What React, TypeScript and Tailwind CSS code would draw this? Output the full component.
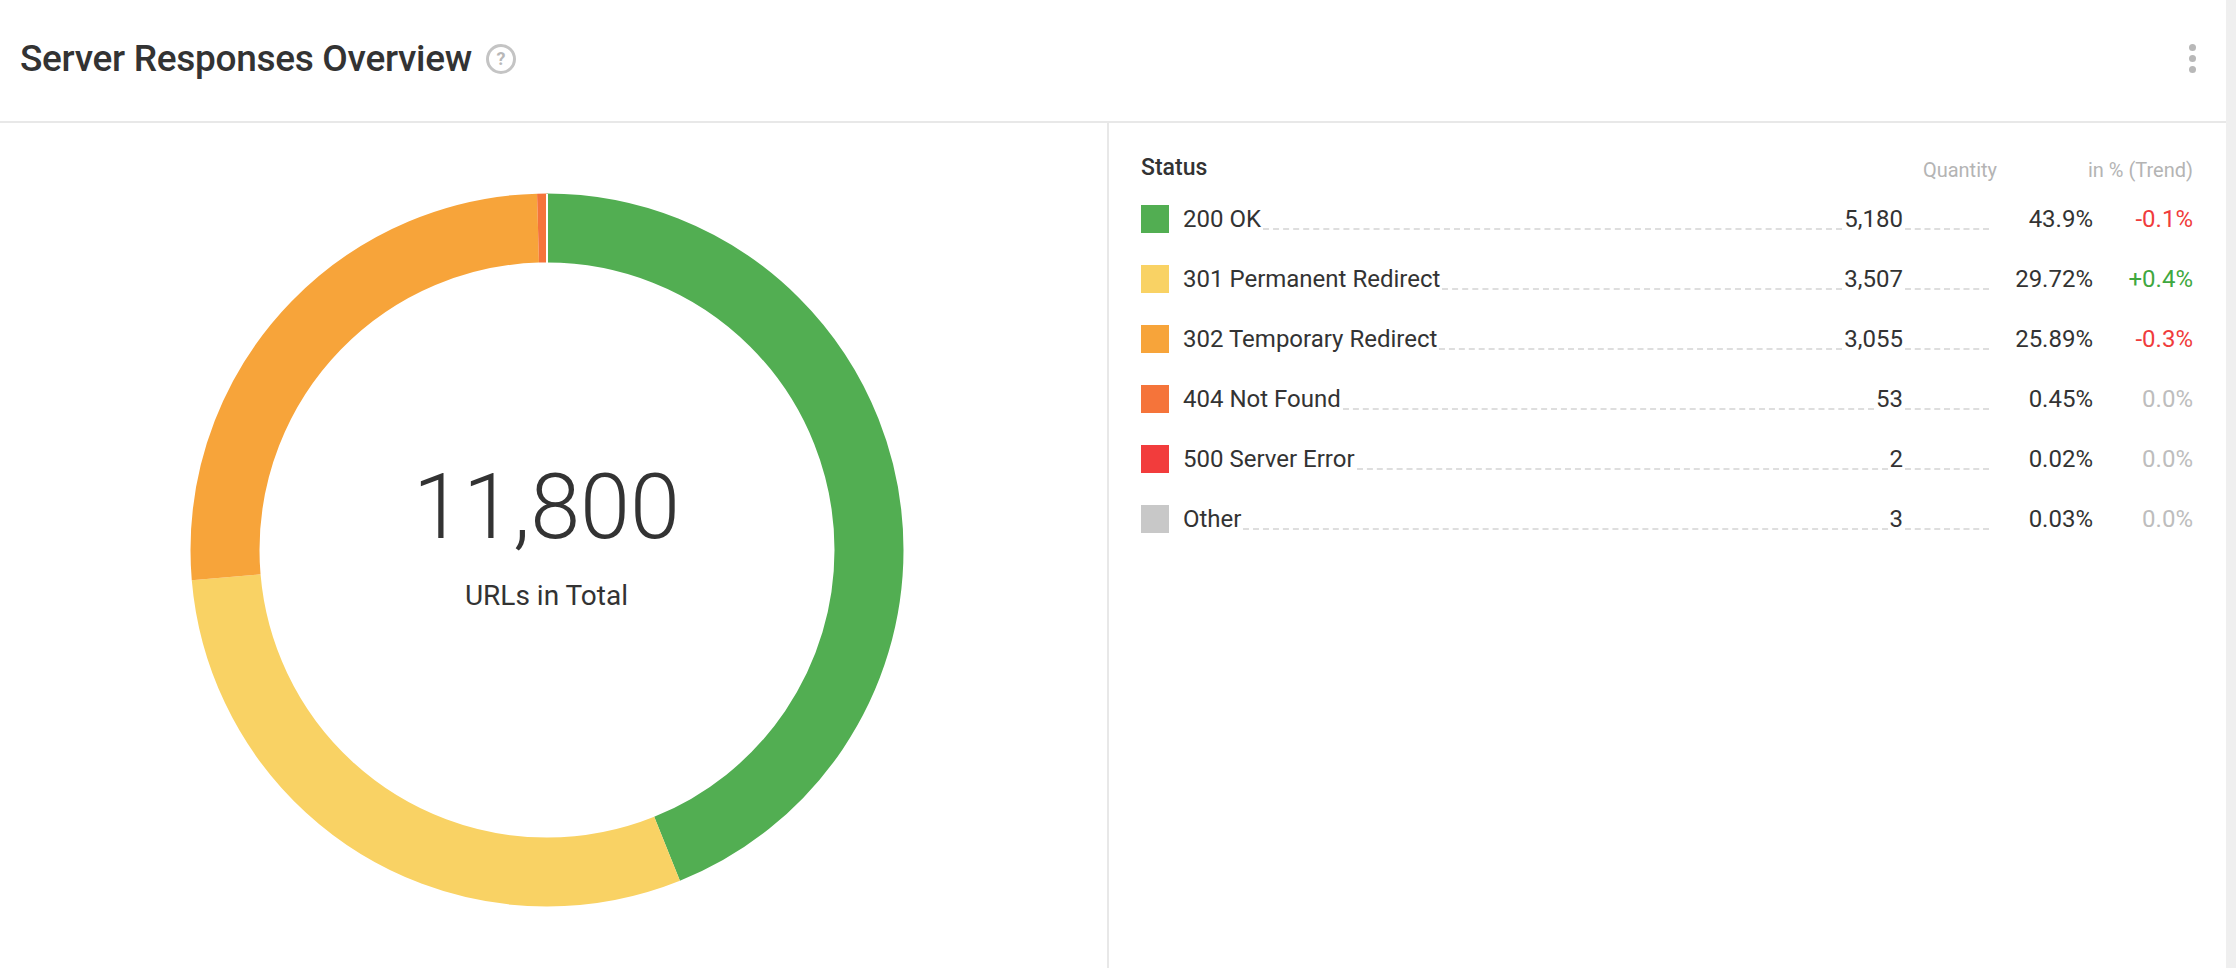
import React from "react";

const rows = [
  { label: "200 OK", qty: "5,180", pct: "43.9%", trend: "-0.1%", tc: "text-[#f03c3c]", color: "#52ae52", v: 43.9 },
  { label: "301 Permanent Redirect", qty: "3,507", pct: "29.72%", trend: "+0.4%", tc: "text-[#3fa83f]", color: "#f9d264", v: 29.72 },
  { label: "302 Temporary Redirect", qty: "3,055", pct: "25.89%", trend: "-0.3%", tc: "text-[#f03c3c]", color: "#f7a43a", v: 25.89 },
  { label: "404 Not Found", qty: "53", pct: "0.45%", trend: "0.0%", tc: "text-[#bdbdbd]", color: "#f5743a", v: 0.45 },
  { label: "500 Server Error", qty: "2", pct: "0.02%", trend: "0.0%", tc: "text-[#bdbdbd]", color: "#f23c3c", v: 0.02 },
  { label: "Other", qty: "3", pct: "0.03%", trend: "0.0%", tc: "text-[#bdbdbd]", color: "#c8c8c8", v: 0.03 },
];

function Donut() {
  const R = 322, C = 2 * Math.PI * R;
  let acc = 0;
  return (
    <svg width="720" height="720" viewBox="0 0 720 720">
      <g transform="rotate(-90 360 360)">
        {rows.map((r) => {
          const len = (r.v / 100) * C;
          const el = (
            <circle key={r.label} cx="360" cy="360" r={R} fill="none" stroke={r.color} strokeWidth="69"
              strokeDasharray={`${len} ${C}`} strokeDashoffset={-acc} />
          );
          acc += len;
          return el;
        })}
        <line x1="360" y1="0" x2="360" y2="0" />
      </g>
      <line x1="360" y1="4" x2="360" y2="73" stroke="#fff" strokeWidth="2" transform="rotate(0 360 360)" />
    </svg>
  );
}

export default function App() {
  return (
    <div className="w-[2236px] h-[968px] bg-white flex overflow-hidden" style={{ fontFamily: "Roboto, 'Liberation Sans', sans-serif" }}>
      <div className="flex-1 flex flex-col">
        <header className="h-[123px] border-b-2 border-[#e8e8e8] flex items-center justify-between pl-[20px] pr-[30px]">
          <div className="flex items-center gap-[14px] pb-[4px]">
            <h1 className="text-[37px] font-medium text-[#333] tracking-[-0.3px]">Server Responses Overview</h1>
            <span className="w-[30px] h-[30px] rounded-full border-[3px] border-[#c4c4c4] text-[#b8b8b8] text-[18px] font-bold flex items-center justify-center">?</span>
          </div>
          <div className="flex flex-col gap-[4px] pb-[4px]">
            <span className="w-[7px] h-[7px] rounded-full bg-[#b8b8b8]" />
            <span className="w-[7px] h-[7px] rounded-full bg-[#b8b8b8]" />
            <span className="w-[7px] h-[7px] rounded-full bg-[#b8b8b8]" />
          </div>
        </header>
        <div className="flex flex-1">
          <div className="w-[1109px] border-r-2 border-[#e8e8e8] flex justify-center pt-[67px] pl-[0px]">
            <div className="relative w-[720px] h-[720px] -ml-[14px]">
              <Donut />
              <div className="absolute inset-0 flex flex-col items-center justify-center pb-[20px]">
                <div className="text-[90px] font-light text-[#333] leading-none">11,800</div>
                <div className="text-[28px] text-[#333] mt-[22px]">URLs in Total</div>
              </div>
            </div>
          </div>
          <div className="flex-1 pl-[32px] pr-[33px] pt-[32px]">
            <div className="flex items-end h-[30px] text-[20px] text-[#b4b4b4]">
              <div className="flex-1 text-[23px] font-medium text-[#333]">Status</div>
              <div className="w-[140px] text-right">Quantity</div>
              <div className="w-[196px] text-right">in % (Trend)</div>
            </div>
            <div className="mt-[4px]">
              {rows.map((r) => (
                <div key={r.label} className="flex items-center h-[60px] text-[24px] text-[#333]">
                  <span className="w-[28px] h-[28px] mr-[14px] shrink-0" style={{ background: r.color }} />
                  <span className="whitespace-nowrap">{r.label}</span>
                  <span className="flex-1 self-end mb-[19px] border-b-2 border-dashed border-[#dedede] mx-[2px]" />
                  <span className="text-right">{r.qty}</span>
                  <span className="w-[84px] self-end mb-[19px] border-b-2 border-dashed border-[#dedede] ml-[2px]" />
                  <span className="w-[104px] text-right">{r.pct}</span>
                  <span className={`w-[100px] text-right ${r.tc}`}>{r.trend}</span>
                </div>
              ))}
            </div>
          </div>
        </div>
      </div>
      <div className="w-[10px] bg-[#efefef]" />
    </div>
  );
}
